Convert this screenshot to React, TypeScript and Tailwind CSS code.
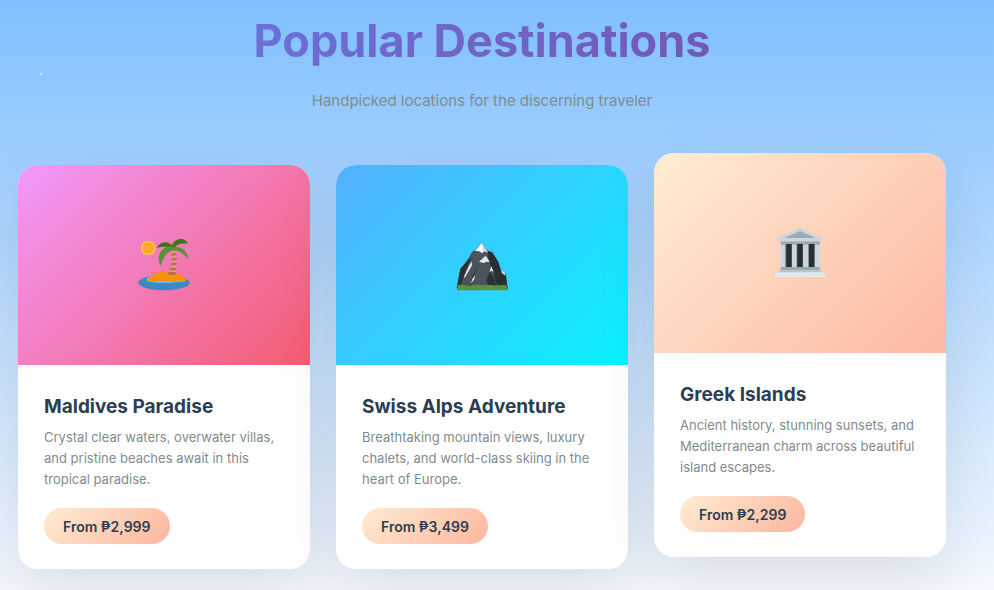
import type { ReactNode } from 'react';

function IslandIcon() {
  return (
    <svg viewBox="54 57 156 156" className="size-[52px]" role="img" aria-label="Desert island">
      <circle cx="85" cy="84" r="22" fill="#ffc14a" />
      <circle cx="85" cy="84" r="17" fill="#ffa72b" />
      <ellipse cx="132" cy="188" rx="77" ry="23" fill="#3b88c3" />
      <path d="M80 180c3-8 14-12 24-17h66c14 5 26 10 28 18-2 9-116 11-118-1z" fill="#88c9f9" />
      <path d="M84 180c6-15 22-24 50-25 33-1 54 9 62 22 3 5 1 8-4 8H88c-4 0-6-1-4-5z" fill="#f4900c" />
      <path d="M152 92c8 20 3 46-8 69 3 6 22 6 25 1-5-23 3-46-2-72z" fill="#d99e82" />
      <path d="M154 101l15-3v7l-14 3zM156 115l14-2v7l-15 2zM154 129l16-1-1 7-16 1zM150 143l18 1v7l-21-2zM145 156l24 1v6c-7 4-17 4-25-1z" fill="#c1694f" />
      <path d="M110 84c6-12 20-20 33-16 11 3 17 10 19 18-18-8-34-6-52-2z" fill="#3e721d" />
      <path d="M155 76c6-14 20-21 32-19 9 2 15 7 16 15-14-3-29-2-40 12z" fill="#3e721d" />
      <path d="M122 138c-12-22-6-48 18-57 8-3 15-3 20 1 20-5 43 8 45 36-10-11-16-20-34-26h-16c-18 8-26 22-33 46z" fill="#5c913b" />
    </svg>
  );
}

function MountainIcon() {
  return (
    <svg viewBox="48 57 156 156" className="size-[52px]" role="img" aria-label="Snow-capped mountain">
      <path d="M50 204l11-57 19-23 16-28 14-9 14-18 18 22 15 7 18 29 8 24 14 10 6 46z" fill="#4b545d" />
      <path d="M141 92l16 5 18 29 8 26 14 9 6 46h-26l-12-28-6-28-11-22zM61 147l21-25 12-8-18 40-16 50H50zM92 204l12-44 18-36-24 42-10 38zM147 200l-8-18 9-26 10 10 12 34z" fill="#292f33" />
      <path d="M124 69l18 25-8-1-8 7-8-6-13-1 8-9z" fill="#f5f8fa" />
      <path d="M137 107l13 20-10-2-9 4-14-4zM154 139l7 17-7-4-6 4zM94 124l2 12-8 14-14 24-2-4 12-26zM105 165l-2 12-11 15 5-15zM184 151l11 8 1 8-11-9z" fill="#e1e8ed" />
      <path d="M124 69l18 25 2 5-14-7z" fill="#ccd6dd" />
      <path d="M50 211l3-16c12-3 23 2 34 2 12 0 20-4 35-2 13 1 24-1 38 1 15 2 25-3 39 0l4 15z" fill="#5c913b" />
    </svg>
  );
}

function TempleIcon() {
  return (
    <svg viewBox="57 51 156 156" className="size-[52px]" role="img" aria-label="Classical building">
      <path d="M77 97h117v82H77z" fill="#ccd6dd" />
      <path d="M77 94h117v10H77z" fill="#9aaab4" />
      <path d="M91 102h19v71H91zM125 102h19v71h-19zM160 102h19v71h-19z" fill="#66757f" />
      <path d="M94 102h16v71H94zM127 102h16v71h-16zM162 102h16v71h-16z" fill="#292f33" />
      <path d="M135 53l66 30q4 3 2 6-1 5-6 5H73q-5 0-6-5-1-4 3-6z" fill="#ccd6dd" />
      <path d="M135 63l46 21H89z" fill="#9aaab4" />
      <path d="M77 171h117v10H77z" fill="#9aaab4" />
      <path d="M75 180h120l9 9H65z" fill="#b8c5cd" />
      <path d="M65 187h140q7 3 7 9 0 5-5 5H64q-5 0-6-5 0-6 7-9z" fill="#e1e8ed" />
    </svg>
  );
}

type Destination = {
  name: string;
  description: string;
  price: string;
  cover: string;
  lift: string;
  icon: ReactNode;
};

const destinations: Destination[] = [
  {
    name: 'Maldives Paradise',
    description: 'Crystal clear waters, overwater villas, and pristine beaches await in this tropical paradise.',
    price: 'From ₱2,999',
    cover: 'bg-[linear-gradient(135deg,#f198fb_0%,#f45c70_100%)]',
    lift: '',
    icon: <IslandIcon />,
  },
  {
    name: 'Swiss Alps Adventure',
    description: 'Breathtaking mountain views, luxury chalets, and world-class skiing in the heart of Europe.',
    price: 'From ₱3,499',
    cover: 'bg-[linear-gradient(135deg,#56affe_0%,#08f2fe_100%)]',
    lift: '',
    icon: <MountainIcon />,
  },
  {
    name: 'Greek Islands',
    description: 'Ancient history, stunning sunsets, and Mediterranean charm across beautiful island escapes.',
    price: 'From ₱2,299',
    cover: 'bg-[linear-gradient(135deg,#ffecd4_0%,#fcb8a2_100%)]',
    lift: '-translate-y-3',
    icon: <TempleIcon />,
  },
];

function DestinationCard({ name, description, price, cover, lift, icon }: Destination) {
  return (
    <article className={`relative overflow-hidden rounded-[20px] bg-white shadow-[0_20px_60px_rgba(0,0,0,0.1)] ${lift}`}>
      <div className={`flex h-[200px] items-center justify-center ${cover}`}>{icon}</div>
      <div className="px-[26px] pt-[26px] pb-[25px]">
        <h3 className="mb-1 text-[19px] leading-8 font-bold text-[#2c3e50]">{name}</h3>
        <p className="mb-[18px] text-[13px] leading-[21px] text-[#7f8c8d]">{description}</p>
        <button
          type="button"
          className="block rounded-full bg-[linear-gradient(135deg,#ffecd2_0%,#fcb69f_100%)] px-[19px] pt-[10px] pb-2 text-[14px] leading-[18px] font-semibold text-[#2c3e50]"
        >
          {price}
        </button>
      </div>
    </article>
  );
}

export default function App() {
  return (
    <main className="relative min-h-screen overflow-hidden bg-[linear-gradient(180deg,#80bfff_0%,#f5f9ff_100%)] pr-12 pb-5 pl-[18px] font-['Inter','Liberation_Sans',sans-serif]">
      <span className="absolute top-[73px] left-10 size-[2px] rounded-full bg-white/80" aria-hidden="true" />
      <header className="pt-2 text-center">
        <h2 className="bg-[linear-gradient(135deg,#667eea_0%,#764ba2_100%)] bg-clip-text text-[45px] leading-[66px] font-bold text-transparent">
          Popular Destinations
        </h2>
        <p className="mt-[14px] text-[15px] leading-[26px] text-[#7f8c8d]">
          Handpicked locations for the discerning traveler
        </p>
      </header>
      <section className="mt-[51px] grid grid-cols-3 gap-[26px]" aria-label="Destinations">
        {destinations.map((d) => (
          <DestinationCard key={d.name} {...d} />
        ))}
      </section>
    </main>
  );
}
